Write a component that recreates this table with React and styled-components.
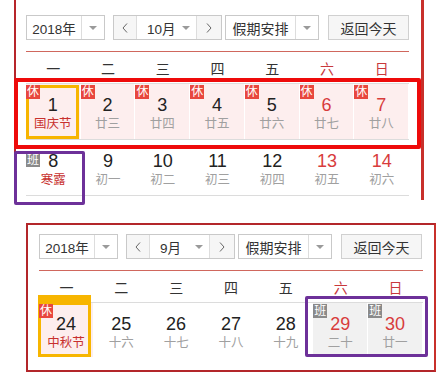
import styled, { createGlobalStyle } from 'styled-components';

const GlobalStyle = createGlobalStyle`
  body {
    margin: 0;
    background: #fff;
    font-family: "Liberation Sans", "Noto Sans CJK SC", sans-serif;
    color: #333;
  }
`;

const Page = styled.div`
  width: 448px;
  height: 378px;
  overflow: hidden;
`;

const Panel = styled.section`
  position: relative;
  box-sizing: border-box;
  width: 410px;
  ${p =>
    p.$cut
      ? `
    margin-left: 14px;
    height: 200px;
    border-left: 2px solid #b7252a;
    border-right: 3px solid #c8302b;
    padding: 15px 12px 4px 10px;
  `
      : `
    margin: 23px 0 0 26px;
    border: 2px solid #b3262a;
    border-right-color: #c8302b;
    padding: 9px 11px 13px 11px;
  `}
`;

const Toolbar = styled.div`
  display: flex;
  height: 25px;
`;

const Select = styled.div`
  box-sizing: border-box;
  display: flex;
  width: ${p => p.$width}px;
  margin-right: ${p => p.$gap || 0}px;
  border: 1px solid #c9c9c9;
  background: #fff;
`;

const SelectText = styled.div`
  flex: 1;
  display: flex;
  align-items: center;
  justify-content: center;
  font-size: ${p => p.$size || 14}px;
  white-space: nowrap;
  color: #333;
`;

const Caret = styled.div`
  width: 22px;
  border-left: 1px solid #ddd;
  display: flex;
  align-items: center;
  justify-content: center;

  &::after {
    content: '';
    border-left: 4px solid transparent;
    border-right: 4px solid transparent;
    border-top: 4px solid #9a9a9a;
  }
`;

const MonthMid = styled.div`
  flex: 1;
  min-width: 0;
  display: flex;
  align-items: center;
  justify-content: space-between;
  padding: 0 6px 0 10px;
  font-size: 13.5px;
  white-space: nowrap;
  color: #333;

  &::after {
    content: '';
    border-left: 4px solid transparent;
    border-right: 4px solid transparent;
    border-top: 4px solid #9a9a9a;
  }
`;

const Arrow = styled.div`
  flex: none;
  width: ${p => p.$width}px;
  background: #f6f6f6;
  display: flex;
  align-items: center;
  justify-content: center;
  border-${p => (p.$side === 'left' ? 'right' : 'left')}: 1px solid #ddd;
`;

const ReturnButton = styled.div`
  box-sizing: border-box;
  width: 81px;
  border: 1px solid #d0d0d0;
  background: #f6f6f6;
  display: flex;
  align-items: center;
  justify-content: center;
  font-size: 14px;
  color: #333;
`;

const Divider = styled.div`
  margin-top: 11px;
  height: 1px;
  background: #d0675d;
`;

const WeekHeader = styled.div`
  display: grid;
  grid-template-columns: repeat(7, 1fr);
  height: 31px;
  border-bottom: 1px solid #dcdcdc;
`;

const WeekDay = styled.div`
  text-align: center;
  padding-top: 4px;
  line-height: 27px;
  font-size: 14px;
  color: ${p => (p.$weekend ? '#c8383c' : '#333')};
`;

const Row = styled.div`
  position: relative;
  display: grid;
  grid-template-columns: repeat(7, 1fr);
  height: ${p => p.$height || 56}px;
  box-sizing: border-box;
  border-bottom: ${p => (p.$noLine ? 'none' : '1px solid #dcdcdc')};
`;

const Cell = styled.div`
  position: relative;
  box-sizing: border-box;
  text-align: center;
  padding-top: 11px;
  background: ${p => (p.$tint === 'rest' ? '#fdeeee' : p.$tint === 'work' ? '#f1f1f1' : 'transparent')};
  border-right: ${p => (p.$tint ? '1px solid #fff' : 'none')};
`;

const DayNum = styled.div`
  font-size: 18px;
  line-height: 20px;
  color: ${p => (p.$weekend ? '#d83c3c' : '#222')};
`;

const Lunar = styled.div`
  font-size: 12.5px;
  line-height: 18px;
  color: ${p => (p.$festival ? '#c8302e' : '#a0a0a0')};
`;

const Badge = styled.span`
  position: absolute;
  z-index: 3;
  left: 0;
  top: ${p => p.$top || 1}px;
  width: 14px;
  height: 14px;
  font-size: 12px;
  line-height: 14px;
  text-align: center;
  color: #fff;
  background: ${p => (p.$work ? '#8a8a8a' : '#e8473e')};
`;

const Selected = styled.div`
  position: absolute;
  z-index: 2;
  left: ${p => (p.$tab ? -1 : 0)}px;
  right: ${p => (p.$tab ? 2 : 1)}px;
  top: ${p => (p.$tab ? -8 : 1)}px;
  bottom: 0;
  border: 3px solid #f7b500;
  border-top-width: ${p => (p.$tab ? 10 : 3)}px;
  pointer-events: none;
`;

const Mark = styled.div`
  position: absolute;
  z-index: 4;
  box-sizing: border-box;
  border: ${p => p.$border}px solid ${p => p.$color};
  border-radius: 2px;
  pointer-events: none;
`;

const Chevron = ({ dir }) => (
  <svg width="6" height="10" viewBox="0 0 6 10">
    <polyline
      points={dir === 'left' ? '5,0.5 1,5 5,9.5' : '1,0.5 5,5 1,9.5'}
      fill="none"
      stroke="#666"
      strokeWidth="1"
    />
  </svg>
);

const WEEK = ['一', '二', '三', '四', '五', '六', '日'];

const Controls = ({ month }) => (
  <>
    <Toolbar>
      <Select $width={79} $gap={8}>
        <SelectText $size={13.5}>2018年</SelectText>
        <Caret />
      </Select>
      <Select $width={109} $gap={3}>
        <Arrow $side="left" $width={22}>
          <Chevron dir="left" />
        </Arrow>
        <MonthMid>{month}</MonthMid>
        <Arrow $side="right" $width={24}>
          <Chevron dir="right" />
        </Arrow>
      </Select>
      <Select $width={94} $gap={9}>
        <SelectText>假期安排</SelectText>
        <Caret />
      </Select>
      <ReturnButton>返回今天</ReturnButton>
    </Toolbar>
    <Divider />
    <WeekHeader>
      {WEEK.map((w, i) => (
        <WeekDay key={w} $weekend={i > 4}>
          {w}
        </WeekDay>
      ))}
    </WeekHeader>
  </>
);

const Day = ({ d, i }) => (
  <Cell $tint={d.tint}>
    {d.selected && <Selected $tab={d.selected === 'tab'} />}
    {d.badge && (
      <Badge $work={d.badge === 'work'} $top={d.badgeTop}>
        {d.badge === 'work' ? '班' : '休'}
      </Badge>
    )}
    <DayNum $weekend={i > 4}>{d.n}</DayNum>
    <Lunar $festival={d.fest}>{d.lunar}</Lunar>
  </Cell>
);

const rest = { badge: 'rest', tint: 'rest' };
const work = { badge: 'work', tint: 'work' };

const octWeek1 = [
  { n: 1, lunar: '国庆节', fest: true, ...rest, selected: 'box' },
  { n: 2, lunar: '廿三', ...rest },
  { n: 3, lunar: '廿四', ...rest },
  { n: 4, lunar: '廿五', ...rest },
  { n: 5, lunar: '廿六', ...rest },
  { n: 6, lunar: '廿七', ...rest },
  { n: 7, lunar: '廿八', ...rest },
];

const octWeek2 = [
  { n: 8, lunar: '寒露', fest: true, badge: 'work', badgeTop: 13 },
  { n: 9, lunar: '初一' },
  { n: 10, lunar: '初二' },
  { n: 11, lunar: '初三' },
  { n: 12, lunar: '初四' },
  { n: 13, lunar: '初五' },
  { n: 14, lunar: '初六' },
];

const sepWeek = [
  { n: 24, lunar: '中秋节', fest: true, ...rest, selected: 'tab' },
  { n: 25, lunar: '十六' },
  { n: 26, lunar: '十七' },
  { n: 27, lunar: '十八' },
  { n: 28, lunar: '十九' },
  { n: 29, lunar: '二十', ...work },
  { n: 30, lunar: '廿一', ...work },
];

export default function App() {
  return (
    <Page>
      <GlobalStyle />
      <Panel $cut>
        <Controls month="10月" />
        <Row>
          {octWeek1.map((d, i) => (
            <Day key={d.n} d={d} i={i} />
          ))}
          <Mark $border={4} $color="#ee0a0a" style={{ left: -12, top: -6, width: 407, height: 71 }} />
        </Row>
        <Row>
          {octWeek2.map((d, i) => (
            <Day key={d.n} d={d} i={i} />
          ))}
          <Mark $border={3} $color="#6d3199" style={{ left: -12, top: 11, width: 71, height: 54 }} />
        </Row>
      </Panel>
      <Panel>
        <Controls month="9月" />
        <Row $height={54} $noLine>
          {sepWeek.map((d, i) => (
            <Day key={d.n} d={d} i={i} />
          ))}
          <Mark $border={3} $color="#6d3199" style={{ left: 266, top: -7, width: 123, height: 61 }} />
        </Row>
      </Panel>
    </Page>
  );
}
